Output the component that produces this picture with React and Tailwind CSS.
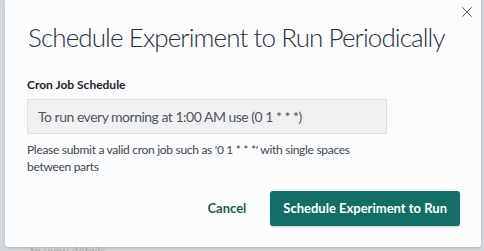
import React from 'react';
import { X } from 'lucide-react';

const App = () => {
  return (
    <div className="w-[484px] h-[251px] overflow-hidden bg-[#d3d6da] relative font-['Lato',sans-serif]">
      {/* faint page behind the overlay */}
      <div className="absolute left-0 bottom-[-6px] pl-[30px] text-[12px] text-[#a9adb3] leading-none">
        to view details
      </div>

      {/* dialog */}
      <div className="ml-[5px] w-[476px] h-[247px] bg-[#fbfcfd] rounded-b-[3px] shadow-[0_1px_3px_rgba(0,0,0,0.15)] flex flex-col relative">
        <button className="absolute right-[5px] top-[3px] text-[#4a4f57]">
          <X className="w-[18px] h-[18px]" strokeWidth={1.2} />
        </button>

        <h1 className="pl-[23px] pt-[19px] text-[26px] font-light text-[#2b2f36] leading-[36px] tracking-[-0.9px] whitespace-nowrap">
          Schedule Experiment to Run Periodically
        </h1>

        <div className="pl-[22px] pt-[22px] flex flex-col">
          <label className="text-[12px] font-bold text-[#1f2328] leading-[16px]">Cron Job Schedule</label>
          <div className="mt-[6px] w-[360px] h-[35px] bg-[#f0f1f3] border border-[#dcdfe3] flex items-center pl-[10px] text-[14px] text-[#51565e] tracking-[-0.5px]">
            To run every morning at 1:00 AM use (0 1 * * *)
          </div>
          <p className="mt-[7px] w-[345px] text-[12px] text-[#42464d] leading-[17px] tracking-[-0.3px]">
            Please submit a valid cron job such as '0 1 * * *' with single spaces between parts
          </p>
        </div>

        <div className="flex justify-end items-center gap-[24px] pr-[21px] mt-auto mb-[21px]">
          <button className="text-[13px] font-bold text-[#1b5f5a]">Cancel</button>
          <button className="h-[35px] px-[13px] rounded-[3px] bg-[#136e68] text-white text-[13px] font-bold shadow-[0_1px_2px_rgba(0,0,0,0.2)]">
            Schedule Experiment to Run
          </button>
        </div>
      </div>
    </div>
  );
};

export default App;
